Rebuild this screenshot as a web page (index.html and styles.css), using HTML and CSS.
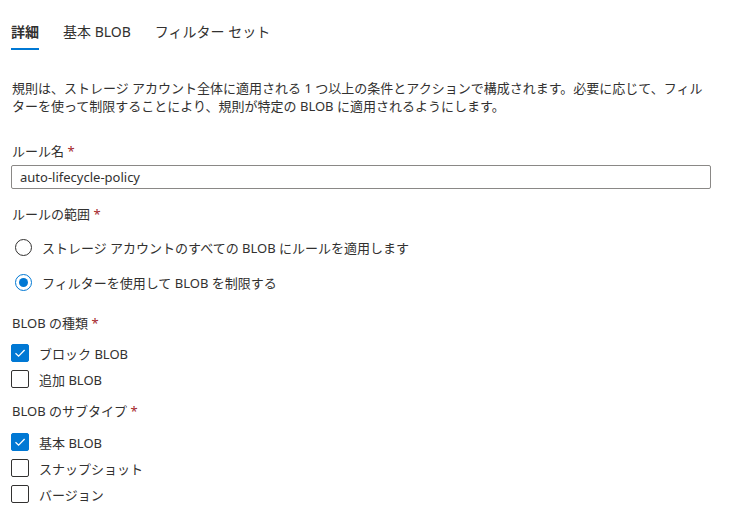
FILE: index.html
```html
<!DOCTYPE html>
<html lang="ja">
<head>
<meta charset="utf-8">
<link rel="stylesheet" href="styles.css">
</head>
<body>
<div class="page">
  <nav class="tabs">
    <span class="tab active">詳細</span>
    <span class="tab">基本 BLOB</span>
    <span class="tab last">フィルター セット</span>
  </nav>
  <p class="desc">規則は、ストレージ アカウント全体に適用される 1 つ以上の条件とアクションで構成されます。必要に応じて、フィルターを使って制限することにより、規則が特定の BLOB に適用されるようにします。</p>

  <div class="field">
    <div class="label">ルール名 <span class="req">*</span></div>
    <div class="input">auto-lifecycle-policy</div>
  </div>

  <div class="field scope">
    <div class="label">ルールの範囲 <span class="req">*</span></div>
    <div class="radios">
      <div class="radio-row"><span class="radio"></span><span>ストレージ アカウントのすべての BLOB にルールを適用します</span></div>
      <div class="radio-row"><span class="radio on"></span><span>フィルターを使用して BLOB を制限する</span></div>
    </div>
  </div>

  <div class="field types">
    <div class="label">BLOB の種類 <span class="req">*</span></div>
    <div class="checks">
      <div class="check-row"><span class="box on"><svg viewBox="0 0 18 18" width="18" height="18"><path d="M4.5 9.2 L7.6 12.2 L13.6 6" fill="none" stroke="#fff" stroke-width="1.3"/></svg></span><span>ブロック BLOB</span></div>
      <div class="check-row"><span class="box"></span><span>追加 BLOB</span></div>
    </div>
  </div>

  <div class="field subtypes">
    <div class="label">BLOB のサブタイプ <span class="req">*</span></div>
    <div class="checks">
      <div class="check-row"><span class="box on"><svg viewBox="0 0 18 18" width="18" height="18"><path d="M4.5 9.2 L7.6 12.2 L13.6 6" fill="none" stroke="#fff" stroke-width="1.3"/></svg></span><span>基本 BLOB</span></div>
      <div class="check-row"><span class="box"></span><span>スナップショット</span></div>
      <div class="check-row"><span class="box"></span><span>バージョン</span></div>
    </div>
  </div>
</div>
</body>
</html>
```

FILE: styles.css
```css
html, body {
  margin: 0;
  padding: 0;
  background: #ffffff;
}
body {
  font-family: "Noto Sans", "Noto Sans CJK JP", sans-serif;
  font-size: 13px;
  color: #323130;
}
.page {
  padding: 0 0 0 11px;
  width: 700px;
}
.tabs {
  display: flex;
  gap: 24px;
  padding-top: 22px;
}
.tab {
  font-size: 14px;
  line-height: 20px;
  padding: 0 0 6px 0;
  border-bottom: 2px solid transparent;
}
.tab.active {
  font-weight: 700;
  border-bottom-color: #0078d4;
}
.tab.last {
  margin-left: 0;
}
.desc {
  margin: 29px 0 0 1px;
  line-height: 18px;
}
.field {
  display: flex;
  flex-direction: column;
}
.label {
  line-height: 18px;
  height: 18px;
  margin-top: 27px;
  padding-left: 1px;
}
.req {
  color: #a4262c;
}
.input {
  margin-top: 5px;
  height: 22px;
  line-height: 22px;
  border: 1px solid #8a8886;
  border-radius: 2px;
  padding-left: 8px;
}
.scope .label {
  margin-top: 16px;
}
.radios {
  display: flex;
  flex-direction: column;
  margin-top: 15px;
  gap: 17px;
}
.radio-row {
  display: flex;
  align-items: center;
  gap: 10px;
  padding-left: 4px;
  height: 18px;
}
.radio {
  width: 15px;
  height: 15px;
  border: 1px solid #323130;
  border-radius: 50%;
  display: flex;
  align-items: center;
  justify-content: center;
  flex: none;
}
.radio.on {
  border-color: #0078d4;
}
.radio.on::after {
  content: "";
  width: 9px;
  height: 9px;
  border-radius: 50%;
  background: #0078d4;
}
.types .label {
  margin-top: 23px;
}
.subtypes .label {
  margin-top: 14px;
}
.checks {
  display: flex;
  flex-direction: column;
  gap: 8px;
  margin-top: 12px;
}
.subtypes .checks {
  margin-top: 13px;
}
.check-row {
  display: flex;
  align-items: center;
  gap: 10px;
  height: 18px;
}
.box {
  width: 16px;
  height: 16px;
  border: 1px solid #323130;
  border-radius: 2px;
  flex: none;
  display: flex;
}
.box.on {
  background: #0078d4;
  border-color: #0078d4;
}
.box svg {
  margin: -1px;
}
```
